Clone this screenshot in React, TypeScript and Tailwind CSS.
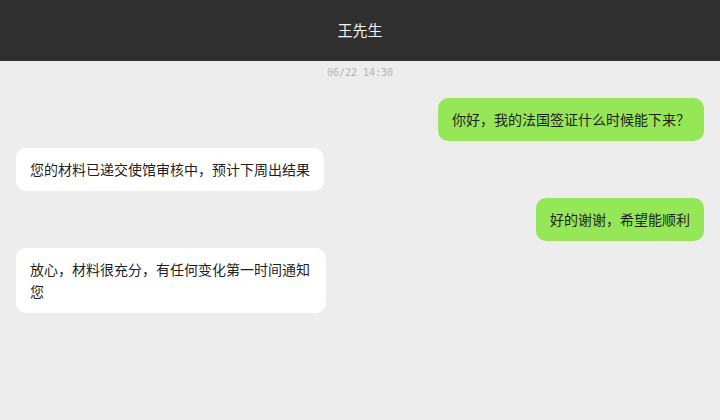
import React from "react";

type Msg = { id: number; from: "me" | "them"; text: string };

const messages: Msg[] = [
  { id: 1, from: "me", text: "你好，我的法国签证什么时候能下来？" },
  { id: 2, from: "them", text: "您的材料已递交使馆审核中，预计下周出结果" },
  { id: 3, from: "me", text: "好的谢谢，希望能顺利" },
  { id: 4, from: "them", text: "放心，材料很充分，有任何变化第一时间通知您" },
];

const cjk = { fontFamily: '"Noto Sans CJK SC", "Noto Sans", sans-serif' };

export default function App() {
  return (
    <div className="w-[720px] h-[420px] bg-[#ededed] flex flex-col overflow-hidden" style={cjk}>
      {/* top bar */}
      <div className="h-[61px] shrink-0 bg-[#2f2f2f] flex items-center justify-center">
        <span className="text-[15px] text-[#f2f2f2]">王先生</span>
      </div>

      <div className="flex justify-center pt-[5px]">
        <span
          className="text-[10px] leading-[14px] text-[#b5b5b5]"
          style={{ fontFamily: '"DejaVu Sans Mono", monospace' }}
        >
          06/22 14:30
        </span>
      </div>

      {/* chat list */}
      <div className="flex flex-col gap-[7px] px-4 pt-[18px]">
        {messages.map((m) => (
          <div key={m.id} className={m.from === "me" ? "flex justify-end" : "flex justify-start"}>
            <div
              className={
                "max-w-[45%] rounded-[10px] px-[14px] pt-[10px] pb-[11px] text-[14px] leading-[22px] text-[#1f1f1f] " +
                (m.from === "me" ? "bg-[#95e758]" : "bg-white")
              }
            >
              {m.text}
            </div>
          </div>
        ))}
      </div>
    </div>
  );
}
